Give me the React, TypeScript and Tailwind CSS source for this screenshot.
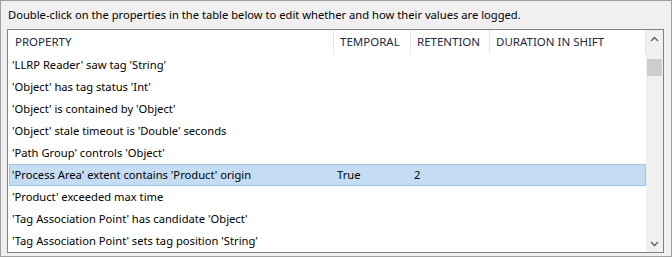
const rows: { name: string; temporal?: string; retention?: string; selected?: boolean }[] = [
  { name: "'LLRP Reader' saw tag 'String'" },
  { name: "'Object' has tag status 'Int'" },
  { name: "'Object' is contained by 'Object'" },
  { name: "'Object' stale timeout is 'Double' seconds" },
  { name: "'Path Group' controls 'Object'" },
  { name: "'Process Area' extent contains 'Product' origin", temporal: 'True', retention: '2', selected: true },
  { name: "'Product' exceeded max time" },
  { name: "'Tag Association Point' has candidate 'Object'" },
  { name: "'Tag Association Point' sets tag position 'String'" },
]

function Chevron({ up }: { up?: boolean }) {
  return (
    <svg width="9" height="6" viewBox="0 0 9 6" className="text-[#606060]">
      <path
        d={up ? 'M1 5 L4.5 1.5 L8 5' : 'M1 1 L4.5 4.5 L8 1'}
        fill="none"
        stroke="currentColor"
        strokeWidth="1.4"
      />
    </svg>
  )
}

export default function App() {
  return (
    <div
      className="flex h-[257px] w-[672px] flex-col border border-[#a0a0a0] bg-[#f0f0f0] pl-[6px] pr-[7px] pb-[3px] text-[11.2px] text-black"
      style={{ fontFamily: '"Noto Sans", "Open Sans", sans-serif' }}
    >
      <div className="flex h-[28px] items-center pl-[1px] pt-[1px]">
        Double-click on the properties in the table below to edit whether and how their values are logged.
      </div>
      <div className="flex h-[224px] border border-[#828282] bg-white">
        <div className="flex w-[638px] flex-col">
          <div className="flex h-[24px] text-[11.5px] text-[#1a2b45]">
            <div className="flex w-[326px] items-center border-r border-[#e5e5e5] pl-[7px]">PROPERTY</div>
            <div className="flex w-[77px] items-center border-r border-[#e5e5e5] pl-[6px]">TEMPORAL</div>
            <div className="flex w-[79px] items-center border-r border-[#e5e5e5] pl-[6px]">RETENTION</div>
            <div className="flex w-[156px] items-center border-r border-[#e5e5e5] pl-[6px]">DURATION IN SHIFT</div>
          </div>
          {rows.map((r) => (
            <div
              key={r.name}
              className={
                r.selected
                  ? 'ml-px flex h-[22px] items-center border border-[#99c9ef] bg-[#c4ddf3]'
                  : 'ml-px flex h-[22px] items-center border border-transparent'
              }
            >
              <div className="w-[324px] truncate pl-[2px]">{r.name}</div>
              <div className="w-[77px] pl-[3px]">{r.temporal}</div>
              <div className="w-[79px] pl-[3px]">{r.retention}</div>
              <div className="flex-1" />
            </div>
          ))}
        </div>
        <div className="flex w-[17px] flex-col bg-[#f0f0f0]">
          <div className="flex h-[17px] items-center justify-center">
            <Chevron up />
          </div>
          <div className="mx-px mt-[12px] h-[17px] bg-[#cdcdcd]" />
          <div className="flex-1" />
          <div className="flex h-[17px] items-center justify-center">
            <Chevron />
          </div>
        </div>
      </div>
    </div>
  )
}
